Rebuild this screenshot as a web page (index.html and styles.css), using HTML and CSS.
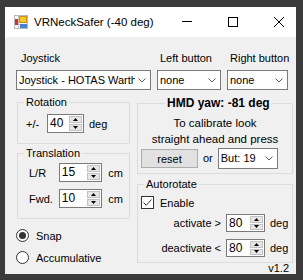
FILE: index.html
```html
<!DOCTYPE html>
<html>
<head>
    <title>VRNeckSafer</title>
    <link rel="stylesheet" href="styles.css">
</head>
<body>
    <div class="window">
        <div class="titlebar">
            <svg class="app-icon" width="14" height="14" viewBox="0 0 14 14">
                <rect x="0.5" y="0.5" width="13" height="13" fill="#f4f4f4" stroke="#b8b8b8"/>
                <line x1="4.5" y1="0" x2="4.5" y2="14" stroke="#c4c4c4"/>
                <line x1="0" y1="4.5" x2="14" y2="4.5" stroke="#c4c4c4"/>
                <line x1="0" y1="9.5" x2="14" y2="9.5" stroke="#c4c4c4"/>
                <rect x="1" y="4" width="3" height="6" fill="#d3302a"/>
                <rect x="5.5" y="1.5" width="7" height="6" fill="#f6c824" stroke="#c98f1a"/>
                <rect x="6" y="9" width="7" height="4" fill="#4a7fd6"/>
            </svg>
            <span class="title">VRNeckSafer (-40 deg)</span>
            <div class="caption">
                <div class="caption-btn"><span class="min-glyph"></span></div>
                <div class="caption-btn"><span class="max-glyph"></span></div>
                <div class="caption-btn">
                    <svg width="10" height="10" viewBox="0 0 10 10">
                        <path d="M0 0 L10 10 M10 0 L0 10" stroke="#000" stroke-width="1"/>
                    </svg>
                </div>
            </div>
        </div>
        <div class="client">
            <div class="top-row">
                <div class="field joystick-field">
                    <label class="field-label">Joystick</label>
                    <div class="combo">
                        <span class="combo-text">Joystick - HOTAS Warthog</span>
                        <svg class="chevron" width="8" height="5" viewBox="0 0 8 5"><path d="M0.5 0.5 L4 4 L7.5 0.5" fill="none" stroke="#5a5a5a"/></svg>
                    </div>
                </div>
                <div class="field left-field">
                    <label class="field-label">Left button</label>
                    <div class="combo">
                        <span class="combo-text">none</span>
                        <svg class="chevron" width="8" height="5" viewBox="0 0 8 5"><path d="M0.5 0.5 L4 4 L7.5 0.5" fill="none" stroke="#5a5a5a"/></svg>
                    </div>
                </div>
                <div class="field right-field">
                    <label class="field-label">Right button</label>
                    <div class="combo">
                        <span class="combo-text">none</span>
                        <svg class="chevron" width="8" height="5" viewBox="0 0 8 5"><path d="M0.5 0.5 L4 4 L7.5 0.5" fill="none" stroke="#5a5a5a"/></svg>
                    </div>
                </div>
            </div>

            <div class="main">
                <div class="left-col">
                    <fieldset class="group rotation">
                        <legend>Rotation</legend>
                        <div class="row">
                            <span class="row-label">+/-</span>
                            <div class="spin spin-rot">
                                <span class="spin-value">40</span>
                                <div class="spin-btns">
                                    <div class="spin-btn"><svg width="5" height="3" viewBox="0 0 5 3"><path d="M0 3 L2.5 0 L5 3 Z" fill="#000"/></svg></div>
                                    <div class="spin-btn"><svg width="5" height="3" viewBox="0 0 5 3"><path d="M0 0 L2.5 3 L5 0 Z" fill="#000"/></svg></div>
                                </div>
                            </div>
                            <span class="unit">deg</span>
                        </div>
                    </fieldset>

                    <fieldset class="group translation">
                        <legend>Translation</legend>
                        <div class="row">
                            <span class="row-label">L/R</span>
                            <div class="spin spin-tr">
                                <span class="spin-value">15</span>
                                <div class="spin-btns">
                                    <div class="spin-btn"><svg width="5" height="3" viewBox="0 0 5 3"><path d="M0 3 L2.5 0 L5 3 Z" fill="#000"/></svg></div>
                                    <div class="spin-btn"><svg width="5" height="3" viewBox="0 0 5 3"><path d="M0 0 L2.5 3 L5 0 Z" fill="#000"/></svg></div>
                                </div>
                            </div>
                            <span class="unit">cm</span>
                        </div>
                        <div class="row second">
                            <span class="row-label">Fwd.</span>
                            <div class="spin spin-tr">
                                <span class="spin-value">10</span>
                                <div class="spin-btns">
                                    <div class="spin-btn"><svg width="5" height="3" viewBox="0 0 5 3"><path d="M0 3 L2.5 0 L5 3 Z" fill="#000"/></svg></div>
                                    <div class="spin-btn"><svg width="5" height="3" viewBox="0 0 5 3"><path d="M0 0 L2.5 3 L5 0 Z" fill="#000"/></svg></div>
                                </div>
                            </div>
                            <span class="unit">cm</span>
                        </div>
                    </fieldset>

                    <div class="radio-row first">
                        <span class="radio checked"></span>
                        <span>Snap</span>
                    </div>
                    <div class="radio-row">
                        <span class="radio"></span>
                        <span>Accumulative</span>
                    </div>
                </div>

                <div class="right-col">
                    <fieldset class="group hmd">
                        <legend>HMD yaw: -81 deg</legend>
                        <p class="calibrate-text">To calibrate look<br>straight ahead and press</p>
                        <div class="reset-row">
                            <div class="button">reset</div>
                            <span class="or">or</span>
                            <div class="combo but-combo">
                                <span class="combo-text">But: 19</span>
                                <svg class="chevron" width="8" height="5" viewBox="0 0 8 5"><path d="M0.5 0.5 L4 4 L7.5 0.5" fill="none" stroke="#5a5a5a"/></svg>
                            </div>
                        </div>
                    </fieldset>

                    <fieldset class="group autorotate">
                        <legend>Autorotate</legend>
                        <div class="check-row">
                            <span class="checkbox">
                                <svg width="11" height="11" viewBox="0 0 11 11"><path d="M1.5 5.5 L4.2 8.3 L9.5 2.5" fill="none" stroke="#333" stroke-width="1"/></svg>
                            </span>
                            <span>Enable</span>
                        </div>
                        <div class="auto-row">
                            <span class="auto-label">activate &gt;</span>
                            <div class="spin spin-auto">
                                <span class="spin-value">80</span>
                                <div class="spin-btns">
                                    <div class="spin-btn"><svg width="5" height="3" viewBox="0 0 5 3"><path d="M0 3 L2.5 0 L5 3 Z" fill="#000"/></svg></div>
                                    <div class="spin-btn"><svg width="5" height="3" viewBox="0 0 5 3"><path d="M0 0 L2.5 3 L5 0 Z" fill="#000"/></svg></div>
                                </div>
                            </div>
                            <span class="unit">deg</span>
                        </div>
                        <div class="auto-row second">
                            <span class="auto-label">deactivate &lt;</span>
                            <div class="spin spin-auto">
                                <span class="spin-value">80</span>
                                <div class="spin-btns">
                                    <div class="spin-btn"><svg width="5" height="3" viewBox="0 0 5 3"><path d="M0 3 L2.5 0 L5 3 Z" fill="#000"/></svg></div>
                                    <div class="spin-btn"><svg width="5" height="3" viewBox="0 0 5 3"><path d="M0 0 L2.5 3 L5 0 Z" fill="#000"/></svg></div>
                                </div>
                            </div>
                            <span class="unit">deg</span>
                        </div>
                    </fieldset>

                    <div class="version">v1.2</div>
                </div>
            </div>
        </div>
    </div>
</body>
</html>
```

FILE: styles.css
```css
body {
    margin: 0;
    width: 303px;
    height: 280px;
    overflow: hidden;
    background-color: #3b3b3b;
    font-family: "Liberation Sans", Arial, sans-serif;
    font-size: 11px;
    color: #000;
}
.window {
    margin: 7px 0 0 5px;
    width: 291px;
    height: 267px;
    background-color: #f0f0f0;
    overflow: hidden;
    display: flex;
    flex-direction: column;
}
.titlebar {
    height: 30px;
    flex: none;
    background-color: #fff;
    display: flex;
    align-items: center;
    padding-left: 9px;
}
.app-icon {
    margin-right: 6px;
    margin-top: -1px;
}
.title {
    flex: 1;
    font-size: 11.5px;
    margin-top: -1px;
}
.caption {
    display: flex;
    margin-right: -6px;
}
.caption-btn {
    width: 46px;
    height: 30px;
    display: flex;
    justify-content: center;
    align-items: center;
}
.caption-btn svg {
    margin-top: -1px;
}
.min-glyph {
    width: 10px;
    height: 1px;
    background-color: #000;
    margin-top: -1px;
}
.max-glyph {
    width: 8px;
    height: 8px;
    border: 1px solid #000;
    margin-top: -1px;
}
.client {
    flex: 1;
}
.top-row {
    display: flex;
    gap: 6px;
    padding: 15px 0 0 11px;
}
.field-label {
    display: block;
    line-height: 13px;
    margin-bottom: 5px;
    white-space: nowrap;
}
.joystick-field { width: 135px; }
.joystick-field .field-label { padding-left: 5px; }
.left-field { width: 64px; }
.left-field .field-label { padding-left: 3px; }
.right-field { width: 61px; }
.right-field .field-label { padding-left: 3px; }
.combo {
    height: 20px;
    box-sizing: border-box;
    border: 1px solid #7a7a7a;
    background-color: #fff;
    display: flex;
    align-items: center;
    padding-left: 2px;
}
.combo-text {
    flex: 1;
    min-width: 0;
    overflow: hidden;
    white-space: nowrap;
}
.chevron {
    flex: none;
    margin: 0 4px 0 3px;
}
.main {
    display: flex;
    gap: 7px;
    padding-left: 12px;
}
.left-col {
    width: 113px;
    display: flex;
    flex-direction: column;
}
.right-col {
    width: 156px;
    display: flex;
    flex-direction: column;
}
.group {
    margin: 6px 0 0 0;
    padding: 0 6px;
    border: 1px solid #dcdcdc;
    min-width: 0;
    box-sizing: border-box;
    width: 100%;
}
.group legend {
    padding: 0 2px;
    line-height: 13px;
}
.row {
    display: flex;
    align-items: center;
    height: 19px;
}
.rotation {
    padding: 0 6px 10px 8px;
}
.rotation legend {
    margin-left: -2px;
}
.rotation .row {
    margin-top: 5px;
}
.rotation .row-label {
    width: 21px;
}
.translation {
    margin-top: 3px;
    padding: 0 6px 10px 11px;
}
.translation legend {
    margin-left: -5px;
}
.translation .row {
    margin-top: 3px;
}
.translation .row.second {
    margin-top: 7px;
}
.translation .row-label {
    width: 30px;
}
.spin {
    height: 19px;
    box-sizing: border-box;
    border: 1px solid #7a7a7a;
    background-color: #fff;
    display: flex;
}
.spin-rot { width: 37px; }
.spin-tr { width: 44px; }
.spin-auto { width: 39px; height: 18px; }
.spin-value {
    flex: 1;
    padding-left: 2px;
    line-height: 16px;
    font-size: 12px;
}
.spin-btns {
    width: 13px;
    margin: 1px 1px 1px 0;
    display: flex;
    flex-direction: column;
    gap: 1px;
}
.spin-btn {
    flex: 1;
    background-color: #e6e6e6;
    border: 1px solid #c2c2c2;
    display: flex;
    align-items: center;
    justify-content: center;
}
.unit {
    margin-left: 5px;
}
.translation .unit {
    margin-left: 6px;
}
.radio-row {
    display: flex;
    align-items: center;
    height: 13px;
    margin-top: 9px;
    margin-left: -1px;
}
.radio-row.first {
    margin-top: 10px;
}
.radio {
    width: 11px;
    height: 11px;
    border: 1px solid #333;
    border-radius: 50%;
    background-color: #fff;
    margin-right: 7px;
    display: flex;
    align-items: center;
    justify-content: center;
}
.radio.checked::after {
    content: "";
    width: 7px;
    height: 7px;
    border-radius: 50%;
    background-color: #333;
}
.hmd {
    padding: 0 3px 5px 3px;
}
.hmd legend {
    font-weight: bold;
    font-size: 12px;
    line-height: 14px;
    margin-left: 24px;
}
.calibrate-text {
    margin: 5px 0 0 0;
    line-height: 16px;
    text-align: center;
    font-size: 11.5px;
}
.reset-row {
    display: flex;
    align-items: center;
    height: 20px;
    margin-top: 1px;
}
.button {
    width: 57px;
    height: 19px;
    box-sizing: border-box;
    border: 1px solid #adadad;
    background-color: #e1e1e1;
    display: flex;
    align-items: center;
    justify-content: center;
    padding-top: 1px;
}
.or {
    margin: 0 5px 0 5px;
}
.but-combo {
    width: 60px;
    height: 21px;
}
.autorotate {
    margin-top: 4px;
    padding: 0 3px 5px 3px;
}
.autorotate legend {
    margin-left: 3px;
}
.check-row {
    display: flex;
    align-items: center;
    height: 13px;
    margin-top: 5px;
}
.checkbox {
    width: 11px;
    height: 11px;
    border: 1px solid #333;
    background-color: #fff;
    margin-right: 6px;
    display: flex;
}
.auto-row {
    display: flex;
    align-items: center;
    height: 18px;
    margin-top: 5px;
}
.auto-row.second {
    margin-top: 7px;
}
.auto-label {
    width: 80px;
    text-align: right;
    margin-right: 5px;
    white-space: nowrap;
}
.version {
    text-align: right;
    padding-right: 4px;
    line-height: 11px;
}
```
